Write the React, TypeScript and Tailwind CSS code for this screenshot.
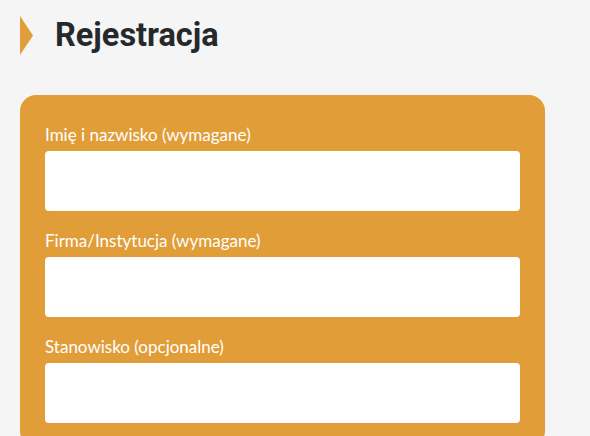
export default function App() {
  const fields = [
    "Imię i nazwisko (wymagane)",
    "Firma/Instytucja (wymagane)",
    "Stanowisko (opcjonalne)",
  ];

  return (
    <div className="min-h-[436px] bg-[#f5f5f5] pl-5 pt-4 pr-[45px]">
      <div className="flex items-center h-[39px]">
        <svg width="13" height="39" viewBox="0 0 13 39" className="shrink-0">
          <polygon points="0,0 13,19.5 0,39" fill="#e19d38" />
        </svg>
        <h1 className="ml-[22px] text-[32.5px] font-bold text-[#25292c] font-['Roboto',sans-serif] leading-none">
          Rejestracja
        </h1>
      </div>

      <div className="mt-10 rounded-[16px] bg-[#e19d38] px-[25px] pt-[30px] pb-6 flex flex-col gap-5">
        {fields.map((label) => (
          <label key={label} className="flex flex-col">
            <span className="text-[17px] leading-5 mb-[6px] text-white font-['Lato',sans-serif]">
              {label}
            </span>
            <input type="text" className="h-[60px] rounded-[4px] bg-white outline-none px-3" />
          </label>
        ))}
      </div>
    </div>
  );
}
